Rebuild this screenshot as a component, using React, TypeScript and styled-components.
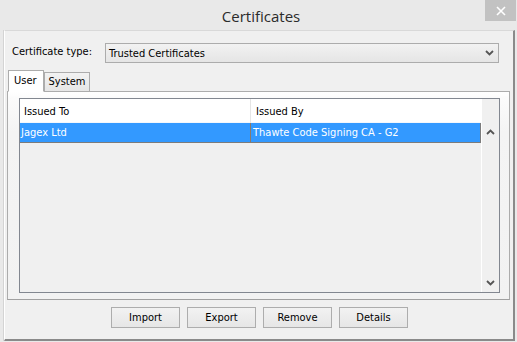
import React, { useState } from 'react';
import styled, { createGlobalStyle } from 'styled-components';

const GlobalStyle = createGlobalStyle`
  html, body {
    margin: 0;
    padding: 0;
    background: #e9e9e9;
  }
  body {
    font-family: Tahoma, "DejaVu Sans", "Liberation Sans", sans-serif;
  }
`;

const Window = styled.div`
  width: 517px;
  height: 342px;
  box-sizing: border-box;
  background: #e9e9e9;
  display: flex;
  flex-direction: column;
  padding: 0 2px 1px 4px;
`;

const TitleBar = styled.div`
  height: 30px;
  display: grid;
  grid-template-columns: 1fr auto 1fr;
  align-items: start;
  flex-shrink: 0;
`;

const Title = styled.div`
  grid-column: 2;
  padding-top: 6px;
  padding-left: 3px;
  font-family: "Open Sans", "Noto Sans", sans-serif;
  font-size: 15px;
  color: #2b2b2b;
`;

const CloseButton = styled.div`
  grid-column: 3;
  justify-self: end;
  width: 31px;
  height: 21px;
  margin-right: -1px;
  background: #c2c2c2;
  color: #fff;
  display: flex;
  align-items: center;
  justify-content: center;
`;

const Panel = styled.div`
  flex: 1;
  background: #f0f0f0;
  border-top: 1px solid #d9d9d9;
  border-left: 1px solid #ffffff;
  border-right: 2px solid #8a8a8a;
  border-bottom: 2px solid #8a8a8a;
  box-shadow: -1px 0 0 #d4d4d4;
  display: flex;
  flex-direction: column;
  padding: 12px 3px 0 2px;
  font-family: "DejaVu Sans", sans-serif;
  font-stretch: condensed;
  font-size: 11px;
  color: #000;
`;

const TypeRow = styled.div`
  display: flex;
  align-items: center;
  height: 20px;
  padding: 0 11px 0 5px;
`;

const Label = styled.span`
  width: 93px;
  flex-shrink: 0;
  margin-top: -4px;
`;

const Combo = styled.div`
  flex: 1;
  height: 18px;
  border: 1px solid #acacac;
  background: linear-gradient(#f2f2f2, #e5e5e5);
  display: flex;
  align-items: center;
  padding: 0 4px 0 3px;
  span {
    flex: 1;
  }
`;

const TabStrip = styled.div`
  display: flex;
  align-items: flex-end;
  height: 22px;
  margin-top: 6px;
  padding-left: 1px;
`;

const Tab = styled.div<{ $active?: boolean }>`
  height: ${(p) => (p.$active ? '22px' : '19px')};
  box-sizing: border-box;
  padding: ${(p) => (p.$active ? '3px 6px 0 5px' : '2px 4px 0 4px')};
  border: 1px solid #acacac;
  border-bottom: ${(p) => (p.$active ? '1px solid #ffffff' : 'none')};
  background: ${(p) => (p.$active ? '#ffffff' : 'linear-gradient(#f2f2f2, #e6e6e6)')};
  position: relative;
  z-index: ${(p) => (p.$active ? 1 : 0)};
  margin-bottom: ${(p) => (p.$active ? '-1px' : '0')};
`;

const TabPane = styled.div`
  height: 209px;
  box-sizing: border-box;
  border: 1px solid #acacac;
  border-bottom-color: #a0a0a0;
  background: linear-gradient(#ffffff 0, #fbfbfb 6px, #f4f4f4 40px, #f2f2f2);
  padding: 6px 9px 6px 11px;
  display: flex;
`;

const Table = styled.div`
  flex: 1;
  border: 1px solid #828790;
  background: #f0f0f0;
  display: grid;
  grid-template-columns: 1fr 18px;
`;

const Rows = styled.div`
  display: flex;
  flex-direction: column;
`;

const HeaderRow = styled.div`
  display: grid;
  grid-template-columns: 230px 1fr;
  height: 24px;
  background: #ffffff;
  box-shadow: inset 0 -1px 0 #f4f7fc;
`;

const HeaderCell = styled.div<{ $divider?: boolean }>`
  display: flex;
  align-items: center;
  padding-left: ${(p) => (p.$divider ? '5px' : '4px')};
  border-left: ${(p) => (p.$divider ? '1px solid #e5e5e5' : 'none')};
  padding-top: 1px;
`;

const DataRow = styled.div<{ $selected?: boolean }>`
  display: grid;
  grid-template-columns: 230px 1fr;
  height: 19px;
  background: ${(p) => (p.$selected ? '#3399ff' : 'transparent')};
  color: ${(p) => (p.$selected ? '#ffffff' : '#000')};
  border-bottom: 1px solid #7c7c7c;
  border-right: 1px solid #7c7c7c;
`;

const DataCell = styled.div<{ $divider?: boolean }>`
  display: flex;
  align-items: center;
  padding-left: ${(p) => (p.$divider ? '2px' : '1px')};
  border-left: ${(p) => (p.$divider ? '1px solid #8a7a6a' : 'none')};
`;

const ScrollBar = styled.div`
  display: flex;
  flex-direction: column;
  justify-content: space-between;
  align-items: center;
  padding: 30px 0 6px;
  background: #f0f0f0;
  border-left: 1px solid #ffffff;
`;

const ButtonRow = styled.div`
  display: flex;
  justify-content: center;
  gap: 7px;
  padding: 7px 0 0 2px;
`;

const Button = styled.button`
  width: 69px;
  height: 21px;
  border: 1px solid #adadad;
  background: linear-gradient(#f2f2f2, #e6e6e6);
  font: inherit;
  color: #000;
  padding: 0;
  margin: 0;
`;

const Chevron = ({ up }: { up?: boolean }) => (
  <svg width="9" height="6" viewBox="0 0 9 6">
    <path
      d={up ? 'M1 5 L4.5 1.5 L8 5' : 'M1 1 L4.5 4.5 L8 1'}
      fill="none"
      stroke="#555"
      strokeWidth="1.8"
    />
  </svg>
);

const certs = [{ to: 'Jagex Ltd', by: 'Thawte Code Signing CA - G2' }];

export default function App() {
  const [tab, setTab] = useState('user');

  return (
    <>
      <GlobalStyle />
      <Window>
        <TitleBar>
          <Title>Certificates</Title>
          <CloseButton>
            <svg width="10" height="10" viewBox="0 0 10 10">
              <path d="M1 1 L9 9 M9 1 L1 9" stroke="#fff" strokeWidth="1.6" />
            </svg>
          </CloseButton>
        </TitleBar>
        <Panel>
          <TypeRow>
            <Label>Certificate type:</Label>
            <Combo>
              <span>Trusted Certificates</span>
              <Chevron />
            </Combo>
          </TypeRow>
          <TabStrip>
            <Tab $active={tab === 'user'} onClick={() => setTab('user')}>User</Tab>
            <Tab $active={tab === 'system'} onClick={() => setTab('system')}>System</Tab>
          </TabStrip>
          <TabPane>
            <Table>
              <Rows>
                <HeaderRow>
                  <HeaderCell>Issued To</HeaderCell>
                  <HeaderCell $divider>Issued By</HeaderCell>
                </HeaderRow>
                {certs.map((c) => (
                  <DataRow key={c.to} $selected>
                    <DataCell>{c.to}</DataCell>
                    <DataCell $divider>{c.by}</DataCell>
                  </DataRow>
                ))}
              </Rows>
              <ScrollBar>
                <Chevron up />
                <Chevron />
              </ScrollBar>
            </Table>
          </TabPane>
          <ButtonRow>
            <Button type="button">Import</Button>
            <Button type="button">Export</Button>
            <Button type="button">Remove</Button>
            <Button type="button">Details</Button>
          </ButtonRow>
        </Panel>
      </Window>
    </>
  );
}
